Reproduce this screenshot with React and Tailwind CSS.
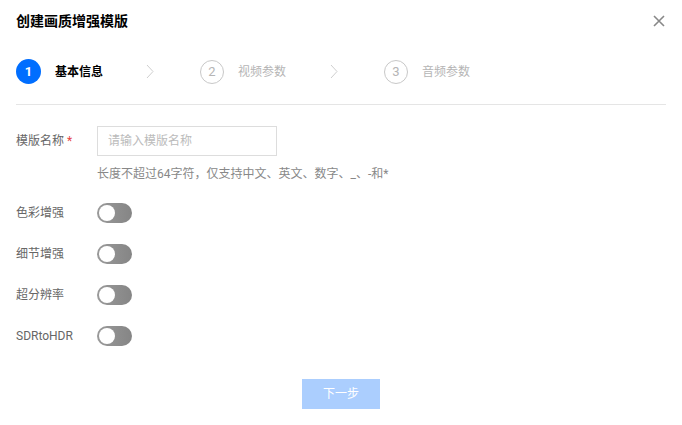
import { useState } from 'react'

const FONT = "font-['Roboto','Noto_Sans_CJK_SC',sans-serif]"

const STEPS = [
  { n: 1, label: '基本信息' },
  { n: 2, label: '视频参数' },
  { n: 3, label: '音频参数' },
]

const TOGGLES = ['色彩增强', '细节增强', '超分辨率', 'SDRtoHDR']

function Chevron() {
  return (
    <svg width="8" height="15" viewBox="0 0 8 15" className="shrink-0">
      <path d="M1 1 L7 7.5 L1 14" fill="none" stroke="#cfcfcf" strokeWidth="1" />
    </svg>
  )
}

function Step({ step, active, last }) {
  return (
    <div className={`flex items-center ${last ? '' : 'w-[184px]'}`}>
      {active ? (
        <div className="w-[25px] h-[25px] rounded-full bg-[#006eff] flex items-center justify-center text-white text-[13px] font-bold">
          {step.n}
        </div>
      ) : (
        <div className="w-[24px] h-[24px] rounded-full border border-[#c8c8c8] flex items-center justify-center text-[#b5b5b5] text-[13px]">
          {step.n}
        </div>
      )}
      <span className={`ml-[14px] text-[12px] ${active ? 'text-black font-bold' : 'text-[#b5b5b5]'}`}>
        {step.label}
      </span>
      {!last && (
        <div className="ml-auto mr-[46px]">
          <Chevron />
        </div>
      )}
    </div>
  )
}

function Toggle({ on, onClick }) {
  return (
    <button
      onClick={onClick}
      className={`relative w-[35px] h-[20px] rounded-full ${on ? 'bg-[#006eff]' : 'bg-gradient-to-r from-[#9a9a9a] to-[#858585]'}`}
    >
      <span
        className={`absolute top-[2px] w-[16px] h-[16px] rounded-full bg-white ${on ? 'left-[17px]' : 'left-[2px]'}`}
      />
    </button>
  )
}

export default function App() {
  const [toggles, setToggles] = useState([false, false, false, false])

  return (
    <div className={`w-full h-[425px] bg-white px-4 ${FONT}`}>

      {/* HEADER */}
      <div className="flex items-center justify-between h-[42px]">
        <h1 className="text-[14px] font-bold text-black">创建画质增强模版</h1>
        <svg width="12" height="12" viewBox="0 0 12 12" className="mr-[1px]">
          <path d="M1 1 L11 11 M11 1 L1 11" stroke="#888" strokeWidth="1.6" />
        </svg>
      </div>

      {/* STEPS */}
      <div className="flex items-center mt-[17px] h-[25px]">
        {STEPS.map((s, i) => (
          <Step key={s.n} step={s} active={i === 0} last={i === STEPS.length - 1} />
        ))}
      </div>

      <div className="h-px bg-[#e5e5e5] mt-[20px]" />

      {/* FORM */}
      <div className="flex items-center mt-[21px]">
        <label className="w-[81px] text-[12px] text-[#666]">
          模版名称<span className="text-[#e54545] ml-[3px]">*</span>
        </label>
        <input
          placeholder="请输入模版名称"
          className="w-[180px] h-[30px] border border-[#dddddd] px-[10px] text-[12px] placeholder:text-[#bbbbbb] outline-none"
        />
      </div>
      <p className="ml-[81px] mt-[9px] text-[12px] leading-[18px] text-[#888]">
        长度不超过64字符，仅支持中文、英文、数字、_、-和*
      </p>

      <div className="flex flex-col gap-[21px] mt-[20px]">
        {TOGGLES.map((t, i) => (
          <div key={t} className="flex items-center h-[20px]">
            <span className="w-[81px] text-[12px] text-[#666]">{t}</span>
            <Toggle
              on={toggles[i]}
              onClick={() => setToggles(toggles.map((v, j) => (j === i ? !v : v)))}
            />
          </div>
        ))}
      </div>

      <div className="flex justify-center mt-[33px]">
        <button className="w-[78px] h-[30px] bg-[#abcefe] text-white text-[12px]">下一步</button>
      </div>
    </div>
  )
}
